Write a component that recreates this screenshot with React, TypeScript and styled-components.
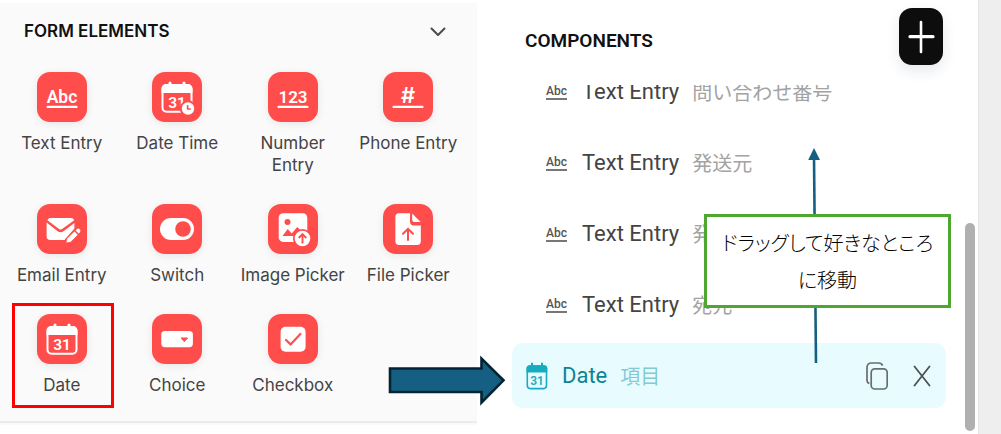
import React from "react";
import styled, { createGlobalStyle } from "styled-components";

const GlobalStyle = createGlobalStyle`
  * { box-sizing: border-box; }
  body { margin: 0; background: #fff; font-family: Inter, "Noto Sans CJK JP", sans-serif; }
  button { border: 0; padding: 0; background: none; font: inherit; color: inherit; cursor: pointer; }
  h2 { margin: 0; }
  svg { display: block; }
`;

const Page = styled.main`
  display: grid;
  grid-template-columns: 477fr 501fr 23px;
  min-height: 100vh;
`;

/* ---------- Form elements palette ---------- */

const Palette = styled.section`
  align-self: start;
  margin-top: 3px;
  padding: 16px 11px 25px 4px;
  background: #fafafa;
  border-bottom: 2px solid #ececec;
  box-shadow: 0 2px 0 #fafafa;
`;

const PaletteHeader = styled.header`
  display: flex;
  align-items: center;
  justify-content: space-between;
  height: 24px;
  padding: 0 16px 0 20px;
  margin-bottom: 29px;
`;

const PaletteTitle = styled.h2`
  font-size: 17px;
  font-weight: 600;
  line-height: 24px;
  color: #111;
`;

const ElementGrid = styled.div`
  display: grid;
  grid-template-columns: repeat(4, 1fr);
  row-gap: 28px;
`;

const ElementButton = styled.button`
  position: relative;
  display: flex;
  flex-direction: column;
  align-items: center;
  justify-content: flex-start;
  gap: 10px;
`;

const Tile = styled.span`
  width: 50px;
  height: 50px;
  border-radius: 13px;
  background: #ff4d4b;
  box-shadow: 0 2px 8px rgba(0, 0, 0, 0.08);
`;

const ElementLabel = styled.span`
  max-width: 110px;
  font-size: 17px;
  line-height: 22px;
  color: #444;
`;

const Highlight = styled.span`
  position: absolute;
  inset: -11px 6px -12px 8px;
  border: 3px solid #f00;
`;

/* ---------- Component list ---------- */

const Components = styled.section`
  position: relative;
  padding: 0 32px 0 35px;
`;

const ListHeader = styled.header`
  display: flex;
  align-items: flex-start;
  justify-content: space-between;
  height: 85px;
  padding: 8px 3px 0 13px;
`;

const ListTitle = styled.h2`
  padding-top: 18px;
  font-family: Roboto, sans-serif;
  font-size: 19px;
  font-weight: 600;
  line-height: 30px;
  color: #111;
`;

const AddButton = styled.button`
  width: 44px;
  height: 57px;
  border-radius: 13px;
  background: #0d0d0d;
  box-shadow: 0 6px 14px rgba(20, 40, 80, 0.1);
`;

const ListViewport = styled.div`
  overflow: hidden;
`;

const List = styled.ul`
  display: flex;
  flex-direction: column;
  gap: 6px;
  margin: -26px 0 0;
  padding: 0;
  list-style: none;
`;

const Row = styled.li<{ $selected?: boolean }>`
  display: flex;
  align-items: center;
  height: 65px;
  padding: 0 15px 0 ${(p) => (p.$selected ? 14 : 34)}px;
  border-radius: 11px;
  background: ${(p) => (p.$selected ? "#e8fcff" : "transparent")};
  color: ${(p) => (p.$selected ? "#0b8494" : "#444")};
`;

const RowName = styled.span`
  margin-left: 14px;
  font-family: Roboto, sans-serif;
  font-size: 22px;
  line-height: 32px;
`;

const RowHint = styled.span<{ $selected?: boolean }>`
  margin-left: 13px;
  font-family: "Noto Sans CJK JP", sans-serif;
  font-size: 20px;
  line-height: 32px;
  color: ${(p) => (p.$selected ? "#84cad4" : "#a3a3a3")};
`;

const RowActions = styled.span`
  display: flex;
  align-items: center;
  gap: 25px;
  margin-left: auto;
`;

const ScrollThumb = styled.div`
  position: absolute;
  top: 223px;
  right: 3px;
  width: 10px;
  height: 208px;
  border-radius: 5px;
  background: #b0b0b0;
`;

const Gutter = styled.aside`
  background: #eee;
  border-left: 1px solid #e4e4e4;
`;

/* ---------- Annotations ---------- */

const BlockArrow = styled.svg`
  position: absolute;
  left: -89px;
  top: 353px;
`;

const DragArrow = styled.svg`
  position: absolute;
  right: 156px;
  top: 147px;
`;

const Callout = styled.p`
  position: absolute;
  top: 214px;
  right: 27px;
  width: 247px;
  margin: 0;
  padding: 7px 10px;
  border: 3px solid #4ea72e;
  background: #fff;
  font-family: "Noto Sans CJK JP", sans-serif;
  font-feature-settings: "palt";
  font-size: 20px;
  font-weight: 300;
  line-height: 37px;
  text-align: center;
  color: #000;
`;

/* ---------- Icons (50 x 50 tiles) ---------- */

const RED = "#ff4d4b";

const TileSvg = ({ children }: { children: React.ReactNode }) => (
  <svg width="50" height="50" viewBox="0 0 50 50" fill="#fff" fontFamily="Inter, sans-serif" fontWeight="600" textAnchor="middle" aria-hidden="true">
    {children}
  </svg>
);

const Underlined = ({ text, size, family }: { text: string; size: number; family: string }) => (
  <TileSvg>
    <text x="25" y="30.5" fontSize={size} fontFamily={family}>{text}</text>
    <rect x="9.5" y="33.7" width="31" height="2.4" rx="1.2" />
  </TileSvg>
);

const CalendarShape = () => (
  <>
    <rect x="10.5" y="13.2" width="29" height="26.5" rx="4" fill="none" stroke="#fff" strokeWidth="2" />
    <path d="M9.5 21v-4.5a4.4 4.4 0 0 1 4.4-4.4h22.2a4.4 4.4 0 0 1 4.4 4.4V21z" />
    <path d="M18 11v3M32 11v3" stroke="#fff" strokeWidth="3" strokeLinecap="round" />
  </>
);

const DateIcon = () => (
  <TileSvg>
    <CalendarShape />
    <text x="25" y="35.5" fontSize="15.5" fontFamily="Roboto, sans-serif">31</text>
  </TileSvg>
);

const DateTimeIcon = () => (
  <TileSvg>
    <CalendarShape />
    <text x="25" y="35.5" fontSize="15.5" fontFamily="Roboto, sans-serif">31</text>
    <circle cx="36" cy="36.5" r="8.2" fill={RED} />
    <circle cx="36" cy="36.5" r="6.2" />
    <path d="M35.6 33v4h3.2" fill="none" stroke={RED} strokeWidth="1.6" />
  </TileSvg>
);

const EmailIcon = () => (
  <TileSvg>
    <path d="M13 14h21a3.6 3.6 0 0 1 3.2 2.2L25.8 24.6a3.6 3.6 0 0 1-4.4 0L10.4 16.2A3.4 3.4 0 0 1 13 14z" />
    <path d="M9.6 18.6 20.4 27a5.2 5.2 0 0 0 6.4 0l10.6-8v5.6L27.6 36H13.4a3.8 3.8 0 0 1-3.8-3.8z" />
    <path d="M30.8 38.2l9.4-9.4" stroke={RED} strokeWidth="8" />
    <path d="M29.4 38.6l.9-4 7.2-7.1 3.2 3.2-7.2 7.2z" />
    <path d="M38.6 26.4l1-1a2.2 2.2 0 0 1 3.2 3.1l-1 1z" />
  </TileSvg>
);

const SwitchIcon = () => (
  <TileSvg>
    <rect x="8" y="14" width="34" height="22" rx="11" />
    <circle cx="31" cy="25" r="7.8" fill={RED} />
  </TileSvg>
);

const ImageIcon = () => (
  <TileSvg>
    <rect x="10.7" y="9.3" width="28.6" height="28.6" rx="4.5" />
    <circle cx="19.5" cy="18" r="3" fill={RED} />
    <path d="M14.5 32l5.2-7 4 4.6 5.6-6.6 9 9z" fill={RED} />
    <circle cx="34.5" cy="34.5" r="9.6" fill={RED} />
    <circle cx="34.5" cy="34.5" r="7.8" />
    <path d="M34.5 39.5v-9M30.7 34l3.8-3.8 3.8 3.8" fill="none" stroke={RED} strokeWidth="1.9" />
  </TileSvg>
);

const FileIcon = () => (
  <TileSvg>
    <path d="M16 9.3h11v8.2a4 4 0 0 0 4 4h6.8v15.8a3.6 3.6 0 0 1-3.6 3.6H16a3.6 3.6 0 0 1-3.6-3.6V12.9A3.6 3.6 0 0 1 16 9.3z" />
    <path d="M29.2 9.5l8.4 8.6h-6.4a2 2 0 0 1-2-2z" />
    <path d="M25 36V26M20 29.8l5-5 5 5" fill="none" stroke={RED} strokeWidth="2" strokeLinecap="round" />
  </TileSvg>
);

const ChoiceIcon = () => (
  <TileSvg>
    <rect x="9.3" y="17" width="31.6" height="16.2" rx="3.6" />
    <path d="M29 24h6.6l-3.3 3.6z" fill={RED} stroke={RED} strokeWidth="1" strokeLinejoin="round" />
  </TileSvg>
);

const CheckboxIcon = () => (
  <TileSvg>
    <rect x="12.6" y="12.8" width="25" height="25" rx="5" />
    <path d="M18 26l4.6 4.4L32.4 20" fill="none" stroke={RED} strokeWidth="2.2" strokeLinecap="round" />
  </TileSvg>
);

const AbcGlyph = () => (
  <svg width="22" height="20" viewBox="0 0 22 20" aria-hidden="true">
    <text x="10.5" y="13" fontSize="12" fontWeight="500" fontFamily="Roboto, sans-serif" textAnchor="middle" fill="#555">Abc</text>
    <rect x="0" y="16" width="21" height="2" fill="#777" />
  </svg>
);

const CalendarGlyph = () => (
  <svg width="22" height="28" viewBox="0 0 22 28" fill="#16acc0" aria-hidden="true">
    <rect x="1.3" y="4" width="19.2" height="22.6" rx="3" fill="none" stroke="#16acc0" strokeWidth="1.6" />
    <path d="M.5 10.5V6.4A3.2 3.2 0 0 1 3.7 3.2h14.4a3.2 3.2 0 0 1 3.2 3.2v4.1z" />
    <path d="M6 1.5v3M16 1.5v3" stroke="#16acc0" strokeWidth="2" strokeLinecap="round" />
    <text x="11" y="22.5" fontSize="12" fontWeight="600" fontFamily="Roboto, sans-serif" textAnchor="middle">31</text>
  </svg>
);

const ROBOTO = "Roboto, sans-serif";
const INTER = "Inter, sans-serif";

const ELEMENTS: { label: string; icon: React.ReactNode; marked?: boolean }[] = [
  { label: "Text Entry", icon: <Underlined text="Abc" size={17.5} family={ROBOTO} /> },
  { label: "Date Time", icon: <DateTimeIcon /> },
  { label: "Number Entry", icon: <Underlined text="123" size={17} family={ROBOTO} /> },
  { label: "Phone Entry", icon: <Underlined text="#" size={22} family={INTER} /> },
  { label: "Email Entry", icon: <EmailIcon /> },
  { label: "Switch", icon: <SwitchIcon /> },
  { label: "Image Picker", icon: <ImageIcon /> },
  { label: "File Picker", icon: <FileIcon /> },
  { label: "Date", icon: <DateIcon />, marked: true },
  { label: "Choice", icon: <ChoiceIcon /> },
  { label: "Checkbox", icon: <CheckboxIcon /> },
];

const ROWS = ["問い合わせ番号", "発送元", "発送先", "宛元"];

export default function App() {
  return (
    <>
      <GlobalStyle />
      <Page>
        <Palette>
          <PaletteHeader>
            <PaletteTitle>FORM ELEMENTS</PaletteTitle>
            <button aria-label="Collapse form elements">
              <svg width="24" height="24" viewBox="0 0 24 24" fill="none" stroke="#4a4a4a" strokeWidth="2" strokeLinecap="round" strokeLinejoin="round">
                <path d="M5.500 9.500l6.500 6.500 6.500-6.500" />
              </svg>
            </button>
          </PaletteHeader>
          <ElementGrid>
            {ELEMENTS.map((e) => (
              <ElementButton key={e.label}>
                <Tile>{e.icon}</Tile>
                <ElementLabel>{e.label}</ElementLabel>
                {e.marked && <Highlight />}
              </ElementButton>
            ))}
          </ElementGrid>
        </Palette>

        <Components>
          <ListHeader>
            <ListTitle>COMPONENTS</ListTitle>
            <AddButton aria-label="Add component">
              <svg width="44" height="57" viewBox="0 0 44 57" stroke="#fff" strokeLinecap="round">
                <path d="M22 14v30" strokeWidth="2.6" />
                <path d="M11 28.7h23" strokeWidth="3.2" />
              </svg>
            </AddButton>
          </ListHeader>
          <ListViewport>
            <List>
              {ROWS.map((hint) => (
                <Row key={hint}>
                  <AbcGlyph />
                  <RowName>Text Entry</RowName>
                  <RowHint>{hint}</RowHint>
                </Row>
              ))}
              <Row $selected>
                <CalendarGlyph />
                <RowName>Date</RowName>
                <RowHint $selected>項目</RowHint>
                <RowActions>
                  <button aria-label="Duplicate">
                    <svg width="22" height="28" viewBox="0 0 22 28" fill="none" stroke="#686d6f" strokeWidth="1.7">
                      <rect x="5.2" y="6.8" width="16" height="20.2" rx="3.6" />
                      <path d="M3.4 21.5C1.8 21 1 19.8 1 18V6c0-3.4 1.4-5 4.4-5h7.2c2 0 3.4.9 4 2.6" />
                    </svg>
                  </button>
                  <button aria-label="Remove">
                    <svg width="18" height="22" viewBox="0 0 18 22" stroke="#4c5152" strokeWidth="1.8" strokeLinecap="round">
                      <path d="M1.5 1.5l15 19M16.5 1.5l-15 19" />
                    </svg>
                  </button>
                </RowActions>
              </Row>
            </List>
          </ListViewport>
          <ScrollThumb />

          <DragArrow width="14" height="217" viewBox="0 0 14 217" aria-hidden="true">
            <path d="M6 10L8 216" stroke="#156082" strokeWidth="2.6" />
            <path d="M.2 13L6 1l6 12z" fill="#156082" />
          </DragArrow>
          <Callout>
            ドラッグして好きなところ
            <br />
            に移動
          </Callout>
          <BlockArrow width="122" height="54" viewBox="0 0 122 54" aria-hidden="true">
            <path d="M2 15.5H93.5V5.5L115.5 27.3L93.5 49.5V39H2z" fill="#156082" stroke="#042433" strokeWidth="2.6" />
          </BlockArrow>
        </Components>
        <Gutter />
      </Page>
    </>
  );
}
